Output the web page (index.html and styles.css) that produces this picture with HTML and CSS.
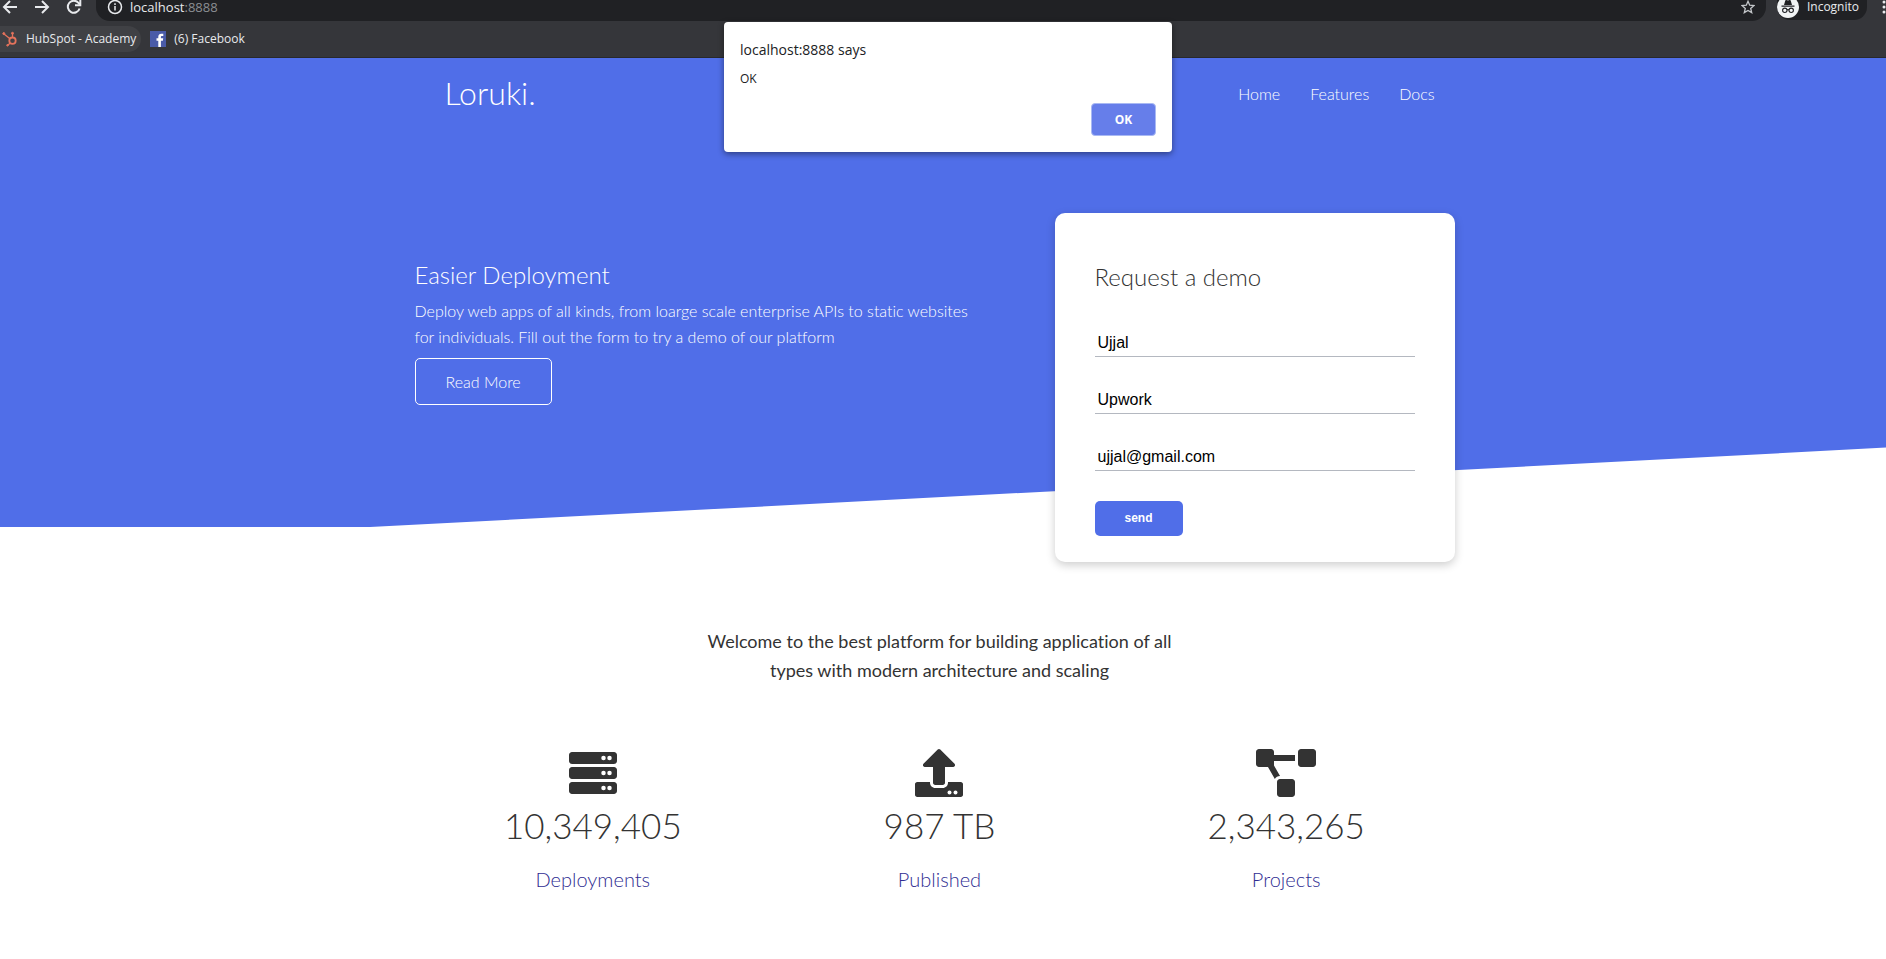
FILE: index.html
```html
<!DOCTYPE html>
<html lang="en">
<head>
<meta charset="utf-8">
<title>Loruki</title>
<link rel="stylesheet" href="styles.css">
</head>
<body>
<div class="browser">
  <div class="toolbar">
    <button class="tool" aria-label="Back"><svg width="16" height="16" viewBox="0 0 16 16" class="line"><path d="M15 8H2M8 2L2 8l6 6"/></svg></button>
    <button class="tool" aria-label="Forward"><svg width="16" height="16" viewBox="0 0 16 16" class="line"><path d="M1 8h13M8 2l6 6-6 6"/></svg></button>
    <button class="tool" aria-label="Reload"><svg width="16" height="16" viewBox="0 0 16 16" class="line"><path d="M13.6 9.5A6 6 0 1 1 12.4 3.800L14 5.500"/><path d="M14.300 1v5.300H9"/></svg></button>
    <div class="address">
      <svg width="16" height="16" viewBox="0 0 16 16" class="line info"><circle cx="8" cy="8" r="6.500"/><path d="M8 7v4.500M8 4.300v1.700"/></svg>
      <span class="url">localhost<span class="port">:8888</span></span>
      <svg width="14" height="14" viewBox="0 0 14 14" class="star"><path d="M7 1.300l1.700 3.900 4.200.4-3.200 2.800 1 4.200L7 10.400l-3.700 2.200 1-4.200L1.100 5.600l4.200-.4z"/></svg>
    </div>
    <div class="incognito">
      <svg width="22" height="22" viewBox="0 0 22 22"><circle cx="11" cy="11" r="11" fill="#f1f3f4"/><path d="M7 9l1.300-4.400q.3-.8 1.100-.5l1.600.5 1.600-.5q.8-.3 1.100.5L15 9zM4.500 9.400h13v1.300h-13z" fill="#202124"/><g fill="none" stroke="#202124" stroke-width="1.100"><circle cx="7.800" cy="14.300" r="2.200"/><circle cx="14.200" cy="14.300" r="2.200"/><path d="M10 14q1-.8 2 0"/></g></svg>
      <span>Incognito</span>
    </div>
    <button class="tool menu" aria-label="Menu"><svg width="4" height="16" viewBox="0 0 4 16" fill="#e8eaed"><circle cx="2" cy="3" r="1.500"/><circle cx="2" cy="8" r="1.500"/><circle cx="2" cy="13" r="1.500"/></svg></button>
  </div>
  <div class="bookmarks">
    <a href="#" class="bookmark hovered"><svg width="16" height="16" viewBox="0 0 16 16" fill="none" stroke="#e5735c"><circle cx="10.500" cy="9.700" r="3.200" stroke-width="1.800"/><path d="M10.500 6.300V3M8 7.700L2 3M8.200 12l-2.400 2.300" stroke-width="1.300"/><circle cx="10.500" cy="2.300" r="1" fill="#e5735c"/><circle cx="1.800" cy="2.600" r="1" fill="#e5735c"/><circle cx="5.500" cy="14.300" r=".8" fill="#e5735c"/></svg>HubSpot - Academy</a>
    <a href="#" class="bookmark"><svg width="16" height="16" viewBox="0 0 16 16"><path fill="#4a5ba8" d="M0 0h16v16H0z"/><path fill="#fff" d="M8.300 16V9.700H6.500V7.300h1.800V5.700c0-2 1.200-3 3-3h2v2.300H12c-.8 0-1.100.4-1.100 1.100v1.200h2.300l-.3 2.400h-2V16z"/></svg>(6) Facebook</a>
  </div>
</div>

<div class="dialog" role="alertdialog" aria-labelledby="dialog-title" aria-describedby="dialog-text">
  <div class="dialog-title" id="dialog-title">localhost:8888 says</div>
  <div class="dialog-text" id="dialog-text">OK</div>
  <button class="dialog-ok">OK</button>
</div>

<header class="navbar">
  <div class="container nav-row">
    <h1 class="logo">Loruki.</h1>
    <nav class="links"><a href="#">Home</a><a href="#">Features</a><a href="#">Docs</a></nav>
  </div>
</header>

<section class="showcase">
  <div class="container showcase-row">
    <div class="intro">
      <h2 class="title">Easier Deployment</h2>
      <p class="lead">Deploy web apps of all kinds, from loarge scale enterprise APIs to static websites for individuals. Fill out the form to try a demo of our platform</p>
      <a href="#" class="btn-outline">Read More</a>
    </div>
    <form class="card">
      <h2 class="card-title">Request a demo</h2>
      <input class="field" type="text" aria-label="Name" value="Ujjal">
      <input class="field" type="text" aria-label="Company" value="Upwork">
      <input class="field" type="email" aria-label="Email" value="ujjal@gmail.com">
      <button class="send" type="button">send</button>
    </form>
  </div>
</section>

<section class="stats">
  <div class="container">
    <h3 class="stats-heading">Welcome to the best platform for building application of all types with modern architecture and scaling</h3>
    <div class="stats-grid">
      <div class="stat">
        <svg class="stat-icon" height="48" width="48" viewBox="0 0 512 512"><path fill-rule="evenodd" d="M480 160H32c-17.673 0-32-14.327-32-32V64c0-17.673 14.327-32 32-32h448c17.673 0 32 14.327 32 32v64c0 17.673-14.327 32-32 32zM480 320H32c-17.673 0-32-14.327-32-32v-64c0-17.673 14.327-32 32-32h448c17.673 0 32 14.327 32 32v64c0 17.673-14.327 32-32 32zM480 480H32c-17.673 0-32-14.327-32-32v-64c0-17.673 14.327-32 32-32h448c17.673 0 32 14.327 32 32v64c0 17.673-14.327 32-32 32z"/><g fill="#fff"><circle cx="432" cy="96" r="24"/><circle cx="368" cy="96" r="24"/><circle cx="432" cy="256" r="24"/><circle cx="368" cy="256" r="24"/><circle cx="432" cy="416" r="24"/><circle cx="368" cy="416" r="24"/></g></svg>
        <div class="number">10,349,405</div>
        <div class="label">Deployments</div>
      </div>
      <div class="stat">
        <svg class="stat-icon" height="48" width="48" viewBox="0 0 512 512"><path d="M296 384h-80c-13.3 0-24-10.7-24-24V192h-87.7c-17.8 0-26.7-21.5-14.1-34.1L242.3 5.7c7.5-7.5 19.8-7.5 27.3 0l152.2 152.2c12.6 12.6 3.7 34.1-14.1 34.1H320v168c0 13.3-10.7 24-24 24zm216-8v112c0 13.3-10.7 24-24 24H24c-13.3 0-24-10.7-24-24V376c0-13.3 10.7-24 24-24h136v8c0 30.9 25.1 56 56 56h80c30.9 0 56-25.1 56-56v-8h136c13.3 0 24 10.7 24 24z"/><g fill="#fff"><circle cx="368" cy="464" r="21"/><circle cx="432" cy="464" r="21"/></g></svg>
        <div class="number">987 TB</div>
        <div class="label">Published</div>
      </div>
      <div class="stat">
        <svg class="stat-icon" height="48" width="60" viewBox="0 0 640 512"><path d="M384 320H256c-17.67 0-32 14.33-32 32v128c0 17.67 14.33 32 32 32h128c17.67 0 32-14.33 32-32V352c0-17.67-14.33-32-32-32zM192 32c0-17.67-14.33-32-32-32H32C14.33 0 0 14.33 0 32v128c0 17.67 14.33 32 32 32h95.72l73.16 128.04C211.98 300.98 232.4 288 256 288h.28L192 175.51V128h224V64H192V32zM608 0H480c-17.67 0-32 14.33-32 32v128c0 17.67 14.33 32 32 32h128c17.67 0 32-14.33 32-32V32c0-17.67-14.33-32-32-32z"/></svg>
        <div class="number">2,343,265</div>
        <div class="label">Projects</div>
      </div>
    </div>
  </div>
</section>
</body>
</html>
```
FILE: styles.css
```css
* { box-sizing: border-box; margin: 0; padding: 0; }
body {
  font: 300 16px/1.6 Lato, sans-serif;
  font-variant-ligatures: none;
  color: #333;
  background: #fff;
  overflow-x: hidden;
}
a { color: inherit; text-decoration: none; }

/* browser frame */
.browser {
  background: #35363a;
  color: #e8eaed;
  font: 400 12px/16px "Open Sans", "Noto Sans", sans-serif;
  border-bottom: 1px solid #28292c;
}
.toolbar { display: flex; align-items: center; height: 21px; padding-left: 2px; line-height: 14px; }
.tool { background: none; border: 0; width: 16px; height: 16px; margin: -7px 16px 0 0; flex: none; }
.line { display: block; fill: none; stroke: #e8eaed; stroke-width: 2; }
.info { stroke-width: 1.5; }
.address {
  flex: 1;
  display: flex;
  align-items: center;
  height: 21px;
  margin-left: -2px;
  padding: 0 11px 7px;
  border-radius: 0 0 14px 14px;
  background: #202124;
}
.url { font-size: 13px; margin-left: 7px; flex: 1; }
.port { color: #8b8e92; }
.star { fill: none; stroke: #c4c7ca; stroke-width: 1.3; }
.incognito {
  display: flex;
  align-items: center;
  gap: 8px;
  height: 20px;
  margin: 0 15px 1px 11px;
  padding: 0 8px 6px 0;
  border-radius: 0 0 13px 13px;
  background: #202124;
}
.menu { width: 4px; margin-right: 0; }
.bookmarks { display: flex; height: 36px; padding-top: 5px; gap: 9px; }
.bookmark { display: flex; align-items: center; gap: 8px; height: 26px; padding-right: 5px; }
.hovered { background: #404145; border-radius: 0 13px 13px 0; padding-left: 2px; }

/* alert box */
.dialog {
  position: absolute;
  top: 22px;
  left: calc(50% + 5px);
  transform: translateX(-50%);
  width: 448px;
  padding: 16px;
  display: flex;
  flex-direction: column;
  z-index: 5;
  background: #fff;
  color: #202124;
  border-radius: 4px;
  box-shadow: 0 2px 6px rgba(0, 0, 0, .45);
  font-family: "Open Sans", "Noto Sans", sans-serif;
  font-weight: 400;
}
.dialog-title { font-size: 14px; line-height: 24px; }
.dialog-text { font-size: 12px; line-height: 16px; margin: 9px 0 16px; }
.dialog-ok {
  align-self: flex-end;
  width: 65px;
  height: 33px;
  border: 1px solid #a9b9f3;
  border-radius: 4px;
  background: #667eea;
  color: #fff;
  font: 700 12px "Open Sans", "Noto Sans", sans-serif;
}

/* page */
.container { width: 100%; max-width: 1100px; margin: 0 auto; }
.navbar, .showcase { background: #506ee8; color: #fff; }
.navbar, .showcase, .stats { padding-right: 7px; }
.nav-row { display: flex; align-items: center; justify-content: space-between; height: 70px; padding: 0 40px 0 55px; }
.logo { font-size: 32px; font-weight: 300; }
.links { display: flex; gap: 30px; padding: 2px 15px 0 0; }
.showcase { position: relative; height: 399px; }
.showcase::before {
  content: "";
  position: absolute;
  left: 0;
  right: 0;
  bottom: -70px;
  height: 100px;
  background: #fff;
  transform: skewY(-3deg);
}
.showcase-row { display: flex; justify-content: space-between; padding: 85px 35px 0 25px; position: relative; }
.intro { width: 560px; padding-top: 43px; }
.title { font-size: 24px; font-weight: 300; }
.lead { margin: 4px 0 8px; }
.btn-outline {
  display: inline-block;
  padding: 10px 30px;
  border: 1px solid #fff;
  border-radius: 5px;
}
.card {
  width: 400px;
  padding: 45px 40px 26px;
  border-radius: 10px;
  background: #fff;
  color: #333;
  box-shadow: 0 3px 10px rgba(0, 0, 0, .2);
}
.card-title { font-size: 24px; font-weight: 300; margin-bottom: 34px; }
.field {
  display: block;
  width: 100%;
  height: 27px;
  margin-bottom: 30px;
  padding: 3px;
  border: 0;
  border-bottom: 1px solid #b4b8c0;
  font: 16px "Liberation Sans", Arial, sans-serif;
  color: #000;
}
.send {
  padding: 10px 30px;
  border: 0;
  border-radius: 5px;
  background: #506ee8;
  color: #fff;
  font: 700 12px/15px "Liberation Sans", Arial, sans-serif;
}
.stats { padding-top: 100px; }
.stats-heading {
  max-width: 500px;
  margin: 0 auto;
  font-size: 18px;
  font-weight: 400;
  text-align: center;
}
.stats-grid { display: grid; grid-template-columns: repeat(3, 1fr); gap: 20px; padding: 64px 40px; }
.stat { display: flex; flex-direction: column; align-items: center; }
.stat-icon { fill: #333; }
.number { font-size: 35px; line-height: 56px; }
.label { font-size: 20px; line-height: 32px; margin-top: 10px; color: #2f2d92; }
```
